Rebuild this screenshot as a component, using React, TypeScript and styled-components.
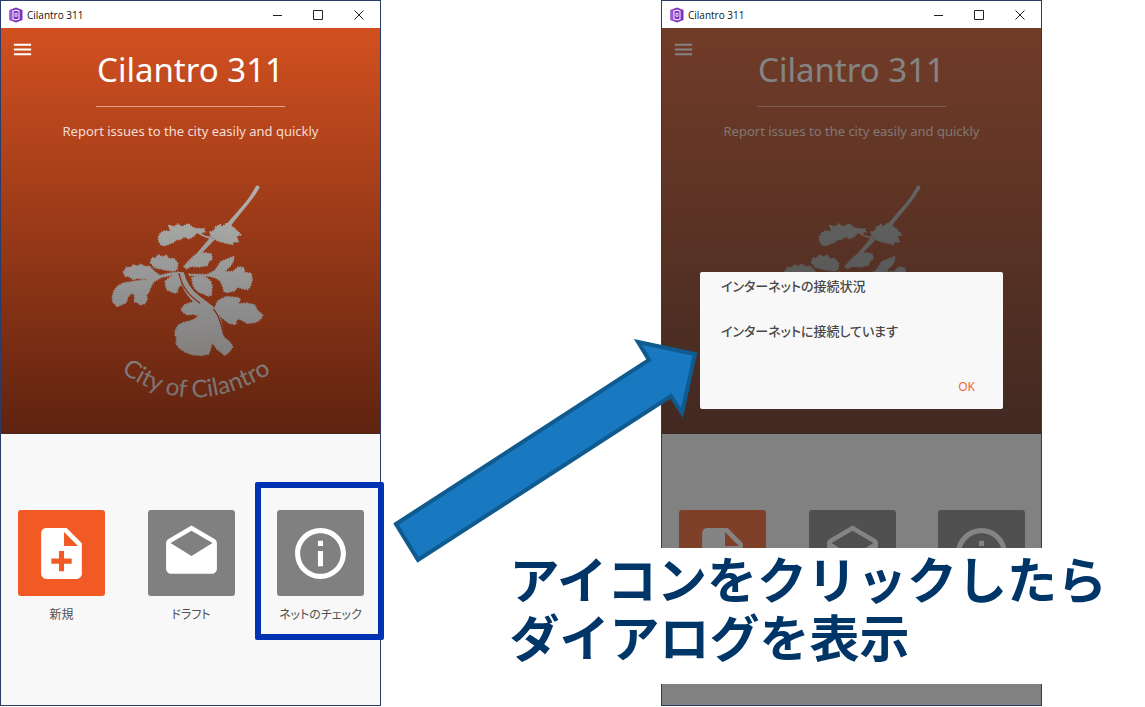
import React from "react";
import styled, { createGlobalStyle } from "styled-components";
import { MdDrafts, MdInfoOutline, MdMenu, MdNoteAdd } from "react-icons/md";

const GlobalStyle = createGlobalStyle`
  * { box-sizing: border-box; }
  body {
    margin: 0;
    background: #fff;
    font-family: "Noto Sans", "Noto Sans CJK JP", sans-serif;
  }
`;

const Stage = styled.main`
  position: relative;
  display: grid;
  grid-template-columns: 381fr 280fr 381fr 103fr;
  align-items: start;
`;

const AppWindow = styled.section<{ $column: number }>`
  grid-column: ${(p) => p.$column};
  grid-row: 1;
  border: 1px solid #2b3c6b;
`;

const TitleBar = styled.header`
  display: flex;
  align-items: center;
  height: 27px;
  padding: 0 14px 0 8px;
  background: #fff;
  color: #111;
`;

const WindowTitle = styled.span`
  flex: 1;
  margin-left: 4px;
  font-family: "Open Sans", sans-serif;
  font-size: 10px;
  line-height: 16px;
`;

const WindowControls = styled.div`
  display: flex;
  gap: 27px;
`;

const PlainButton = styled.button`
  display: block;
  padding: 0;
  border: 0;
  background: none;
  color: inherit;
  font: inherit;
  line-height: 0;
`;

const Body = styled.div`
  position: relative;
`;

const Hero = styled.div`
  position: relative;
  display: flex;
  flex-direction: column;
  align-items: center;
  height: 406px;
  padding-top: 18px;
  background: linear-gradient(#d25020, #5f2310);
  border-bottom: 1px solid #47291d;
  color: #fff;
`;

const MenuButton = styled(PlainButton)`
  position: absolute;
  left: 10px;
  top: 10px;
`;

const AppTitle = styled.h1`
  margin: 0;
  font-size: 33px;
  font-weight: 400;
  line-height: 48px;
`;

const Rule = styled.hr`
  width: 50%;
  margin: 12px 0 15px;
  border: 0;
  border-top: 1px solid #e0a48c;
`;

const Tagline = styled.p`
  margin: 0;
  color: #f6ddd3;
  font-size: 13px;
  line-height: 18px;
`;

const Emblem = styled.svg`
  width: 180px;
  height: 235px;
  margin-top: 35px;
`;

const Actions = styled.nav`
  display: flex;
  justify-content: space-between;
  height: 271px;
  padding: 76px 16px 0 17px;
  background: #f8f8f8;
`;

const Action = styled.button<{ $highlighted?: boolean }>`
  position: relative;
  display: flex;
  flex-direction: column;
  align-items: center;
  gap: 8px;
  width: 87px;
  height: 116px;
  padding: 0;
  border: 0;
  background: none;
  color: #505050;
  font-family: "Noto Sans CJK JP", sans-serif;
  font-size: 12px;
  font-feature-settings: "palt";
  line-height: 20px;
  white-space: nowrap;

  &::after {
    content: "";
    display: ${(p) => (p.$highlighted ? "block" : "none")};
    position: absolute;
    inset: -28px -20px -14px -22px;
    border: 6px solid #0033b4;
    border-radius: 2px;
  }
`;

const Tile = styled.span<{ $color: string }>`
  display: flex;
  align-items: center;
  justify-content: center;
  width: 87px;
  height: 86px;
  border-radius: 3px;
  background: ${(p) => p.$color};
  color: #fff;
`;

const Scrim = styled.div`
  position: absolute;
  inset: 0;
  padding: 244px 38px 0;
  background: rgba(46, 46, 46, 0.59);
`;

const Dialog = styled.div`
  display: flex;
  flex-direction: column;
  height: 137px;
  padding: 4px 28px 12px 21px;
  border-radius: 2px;
  background: #f8f8f8;
  color: #484848;
  font-family: "Noto Sans CJK JP", sans-serif;
  font-feature-settings: "palt";
`;

const DialogTitle = styled.h2`
  margin: 0 0 25px;
  font-size: 13px;
  font-weight: 500;
  line-height: 20px;
`;

const DialogMessage = styled.p`
  margin: 0;
  font-size: 13px;
  font-weight: 500;
  line-height: 20px;
`;

const OkButton = styled(PlainButton)`
  align-self: flex-end;
  margin-top: auto;
  color: #f0673a;
  font-family: "Noto Sans", sans-serif;
  font-size: 12px;
  line-height: 20px;
`;

const Arrow = styled.svg`
  position: absolute;
  left: 34.2%;
  top: 338px;
  width: 310px;
  height: 226px;
`;

const Caption = styled.p`
  position: absolute;
  left: 44.5%;
  right: 0;
  top: 548px;
  margin: 0;
  padding: 0 0 20px;
  background: #fff;
  color: #003568;
  font-family: "Noto Sans CJK JP", sans-serif;
  font-size: 50px;
  font-weight: 700;
  line-height: 58px;
  white-space: nowrap;
`;

function AppLogo() {
  return (
    <svg width="14" height="16" viewBox="0 0 14 16" aria-hidden="true">
      <path d="M7 .5 13.500 3v10L7 15.500.5 13V3z" fill="#7b2fc0" />
      <path d="M.5 3 4 1.700v12.600L.5 13z" fill="#9b55d8" />
      <path d="M4 4l3-.8L10 4v8l-3 .8L4 12z" fill="none" stroke="#efe0fb" strokeWidth="1.2" />
      <path d="M6 6.300h2v3H6z" fill="none" stroke="#efe0fb" />
    </svg>
  );
}

const LEAVES = [
  "M173 185L179 174 190 168 210 170 203 151 220 156 230 148 242 156 262 147 272 156 285 161 309 162 311 170 300 174 285 173 278 184 262 191 252 184 235 194 225 193 219 201 190 212 180 209 173 197Z",
  "M328 171L340 168 344 156 358 149 363 156 375 147 388 151 401 161 419 179 405 183 412 201 398 200 394 208 375 204 350 197 338 190 329 182Z",
  "M149 262L153 249 165 250 171 240 185 246 197 241 201 251 218 251 230 265 228 282 217 288 190 284 160 277Z",
  "M250 274L261 261 280 242 295 236 314 234 331 238 333 252 322 260 319 271 295 275 270 274 256 281Z",
  "M68 291L77 277 88 279 97 270 110 274 119 268 130 275 145 274 160 290 176 302 205 295 236 291 238 295 205 302 180 307 158 320 150 332 144 350 136 360 138 375 130 386 118 389 108 381 100 380 102 362 96 353 84 360 79 370 75 383 62 388 48 395 43 387 36 382 34 365 40 346 50 334 66 325 100 319 146 313 110 310 96 313 84 304 73 304Z",
  "M194 318L205 309 222 298 238 301 240 315 239 330 230 338 229 350 221 354 210 349 198 344 194 332Z",
  "M273 309L285 304 308 304 320 311 329 320 333 335 331 350 331 360 320 363 308 356 295 352 285 344 277 332Z",
  "M265 298L318 299 342 287 360 260 398 245 397 257 390 270 369 291 396 290 412 276 428 279 431 293 450 295 453 315 448 333 440 343 420 340 412 334 400 347 380 352 370 350 365 332 357 316 345 309 325 303 265 301Z",
  "M242 401L252 389 275 382 297 385 318 391 338 401 350 415 360 440 368 487 385 500 395 515 385 530 371 541 360 531 348 522 334 501 327 525 322 537 300 541 275 539 255 532 236 520 225 505 228 490 222 478 224 465 233 450 248 443 275 436 296 422 275 417 258 419 245 410Z",
  "M340 401L351 378 375 365 413 369 418 375 408 387 438 385 460 390 470 408 485 420 479 431 467 441 440 445 415 431 407 432 403 449 382 443 363 428 347 413Z",
];

function CilantroEmblem({ id, lettering }: { id: string; lettering: boolean }) {
  const paint = `url(#${id}-fade)`;
  return (
    <Emblem viewBox="0 0 540 705" role="img" aria-label="City of Cilantro">
      <defs>
        <linearGradient id={`${id}-fade`} gradientUnits="userSpaceOnUse" x1="0" y1="30" x2="0" y2="680">
          <stop offset="0" stopColor="#b2b2b0" />
          <stop offset="0.5" stopColor="#929292" />
          <stop offset="1" stopColor="#777170" />
        </linearGradient>
        <path id={`${id}-arc`} d="M60 590Q276 750 532 580" />
      </defs>
      <g fill={paint}>
        <path d="M465 33q8-4 11 4c-18 35-48 66-87 116l-16-2c44-50 72-78 92-118z" />
        <path d="M327 188l16 4-48 50-14 0z" />
        <path d="M290 168q18 16 42 18l-2 6q-24-4-44-20z" />
        <path d="M226 292l24 0c8 32 24 54 42 68l46 36 28 70-30-6-30-56c-40-30-66-56-70-106z" />
        {LEAVES.map((d) => (
          <path key={d} d={d} stroke={paint} strokeWidth="6" strokeLinecap="round" strokeLinejoin="round" strokeDasharray="0 8" />
        ))}
      </g>
      <g fill="none" stroke="#8d3213" strokeWidth="4" strokeLinecap="round">
        <path d="M234 296c8 34 20 54 42 72l20 16" />
        <path d="M250 290c8 30 22 54 46 70l38 28" />
        <path d="M338 403c15 16 22 38 30 76" stroke="#7b2c12" />
      </g>
      {lettering && (
        <text fill={paint} fontFamily="Lato, sans-serif" fontSize="73">
          <textPath href={`#${id}-arc`}>City of Cilantro</textPath>
        </text>
      )}
    </Emblem>
  );
}

const ACTIONS = [
  { label: "新規", color: "#f15a24", Icon: MdNoteAdd },
  { label: "ドラフト", color: "#808080", Icon: MdDrafts },
  { label: "ネットのチェック", color: "#808080", Icon: MdInfoOutline },
];

function CityWindow({
  id,
  column,
  covered = false,
  highlighted,
  children,
}: {
  id: string;
  column: number;
  covered?: boolean;
  highlighted?: number;
  children?: React.ReactNode;
}) {
  return (
    <AppWindow $column={column}>
      <TitleBar>
        <AppLogo />
        <WindowTitle>Cilantro 311</WindowTitle>
        <WindowControls>
          <PlainButton aria-label="Minimize">
            <svg width="14" height="14" stroke="#222">
              <path d="M3 7.500h9" />
            </svg>
          </PlainButton>
          <PlainButton aria-label="Maximize">
            <svg width="14" height="14" stroke="#222" fill="none">
              <path d="M2.500 2.500h9v9h-9z" />
            </svg>
          </PlainButton>
          <PlainButton aria-label="Close">
            <svg width="14" height="14" stroke="#222">
              <path d="M2.500 2.500l9 9M11.500 2.500l-9 9" />
            </svg>
          </PlainButton>
        </WindowControls>
      </TitleBar>
      <Body>
        <Hero>
          <MenuButton aria-label="Menu">
            <MdMenu size={23} />
          </MenuButton>
          <AppTitle>Cilantro 311</AppTitle>
          <Rule />
          <Tagline>Report issues to the city easily and quickly</Tagline>
          <CilantroEmblem id={id} lettering={!covered} />
        </Hero>
        <Actions>
          {ACTIONS.map(({ label, color, Icon }, i) => (
            <Action key={label} aria-label={label} $highlighted={highlighted === i}>
              <Tile $color={color}>
                <Icon size={61} />
              </Tile>
              {!covered && label}
            </Action>
          ))}
        </Actions>
        {children}
      </Body>
    </AppWindow>
  );
}

export default function App() {
  return (
    <>
      <GlobalStyle />
      <Stage>
        <CityWindow id="home" column={1} highlighted={2} />
        <CityWindow id="status" column={3} covered>
          <Scrim>
            <Dialog role="dialog" aria-labelledby="status-title">
              <DialogTitle id="status-title">インターネットの接続状況</DialogTitle>
              <DialogMessage>インターネットに接続しています</DialogMessage>
              <OkButton>OK</OkButton>
            </Dialog>
          </Scrim>
        </CityWindow>
        <Arrow viewBox="0 0 310 226" aria-hidden="true">
          <path
            d="M4 186 257 22 246 4 303 16 290 75 279 58 26 222z"
            fill="#1878c0"
            stroke="#0f5a8f"
            strokeWidth="4"
          />
        </Arrow>
        <Caption>
          アイコンをクリックしたら
          <br />
          ダイアログを表示
        </Caption>
      </Stage>
    </>
  );
}
